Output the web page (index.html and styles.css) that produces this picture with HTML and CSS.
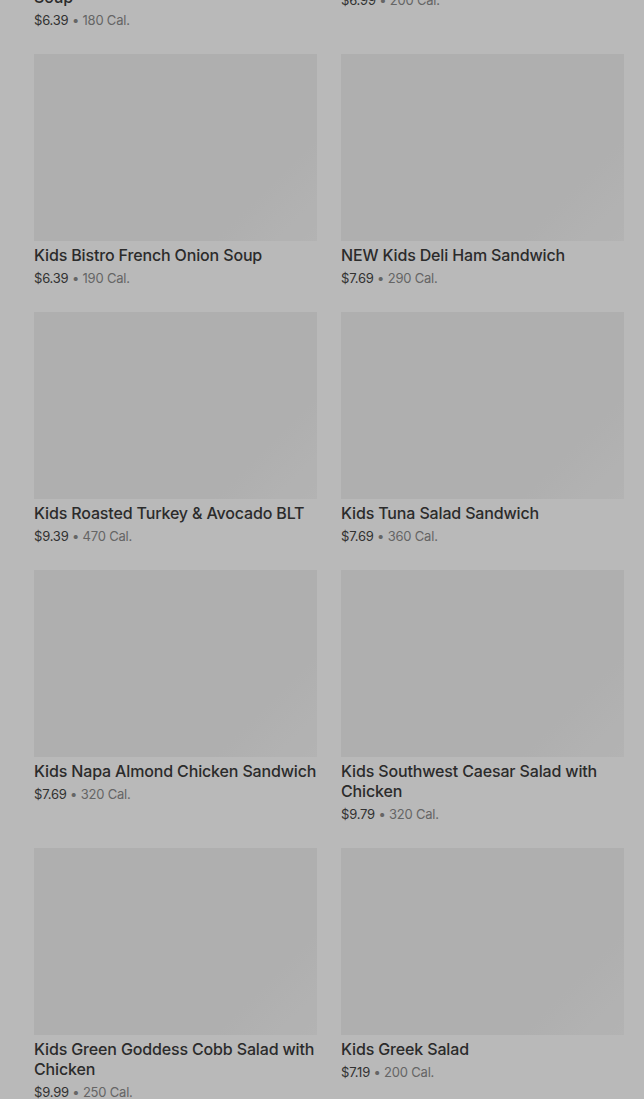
FILE: index.html
```html
<!DOCTYPE html>
<html lang="en">
<head>
    <meta charset="UTF-8">
    <meta name="viewport" content="width=device-width, initial-scale=1.0">
    <title>Kids Menu</title>
    <link rel="stylesheet" href="styles.css">
</head>
<body>
    <div class="overlay"></div>
    <main class="menu-grid">
        <div class="menu-item">
            <div class="item-image"></div>
            <h3 class="item-name">Kids Cream of Chicken &amp; Wild Rice Soup</h3>
            <p class="item-meta"><span class="price">$6.39</span> • 180 Cal.</p>
        </div>
        <div class="menu-item">
            <div class="item-image"></div>
            <h3 class="item-name">Kids Mac &amp; Cheese</h3>
            <p class="item-meta"><span class="price">$6.99</span> • 200 Cal.</p>
        </div>
        <div class="menu-item">
            <div class="item-image"></div>
            <h3 class="item-name">Kids Bistro French Onion Soup</h3>
            <p class="item-meta"><span class="price">$6.39</span> • 190 Cal.</p>
        </div>
        <div class="menu-item">
            <div class="item-image"></div>
            <h3 class="item-name">NEW Kids Deli Ham Sandwich</h3>
            <p class="item-meta"><span class="price">$7.69</span> • 290 Cal.</p>
        </div>
        <div class="menu-item">
            <div class="item-image"></div>
            <h3 class="item-name">Kids Roasted Turkey &amp; Avocado BLT</h3>
            <p class="item-meta"><span class="price">$9.39</span> • 470 Cal.</p>
        </div>
        <div class="menu-item">
            <div class="item-image"></div>
            <h3 class="item-name">Kids Tuna Salad Sandwich</h3>
            <p class="item-meta"><span class="price">$7.69</span> • 360 Cal.</p>
        </div>
        <div class="menu-item">
            <div class="item-image"></div>
            <h3 class="item-name">Kids Napa Almond Chicken Sandwich</h3>
            <p class="item-meta"><span class="price">$7.69</span> • 320 Cal.</p>
        </div>
        <div class="menu-item">
            <div class="item-image"></div>
            <h3 class="item-name">Kids Southwest Caesar Salad with Chicken</h3>
            <p class="item-meta"><span class="price">$9.79</span> • 320 Cal.</p>
        </div>
        <div class="menu-item">
            <div class="item-image"></div>
            <h3 class="item-name">Kids Green Goddess Cobb Salad with Chicken</h3>
            <p class="item-meta"><span class="price">$9.99</span> • 250 Cal.</p>
        </div>
        <div class="menu-item">
            <div class="item-image"></div>
            <h3 class="item-name">Kids Greek Salad</h3>
            <p class="item-meta"><span class="price">$7.19</span> • 200 Cal.</p>
        </div>
    </main>
</body>
</html>
```

FILE: styles.css
```css
body {
    margin: 0;
    background-color: #ffffff;
    font-family: 'Inter', 'Liberation Sans', sans-serif;
    overflow: hidden;
    height: 1099px;
}
/* page is scrolled down a bit */
.menu-grid {
    display: grid;
    grid-template-columns: 283px 283px;
    column-gap: 24px;
    row-gap: 24px;
    align-items: start;
    margin-top: -224px;
    padding: 0 20px 0 34px;
}
.item-image {
    height: 187px;
    background: linear-gradient(135deg, #f2f2f2 0%, #f2f2f2 78%, #f7f7f7 100%);
}
.item-name {
    margin: 4px 0 0 0;
    font-size: 16px;
    line-height: 20px;
    font-weight: 500;
    letter-spacing: -0.15px;
    color: #3c3c3c;
}
.item-meta {
    margin: 3px 0 0 0;
    font-size: 13px;
    line-height: 20px;
    letter-spacing: -0.2px;
    color: #8c8c8c;
}
.item-meta .price {
    color: #454545;
}
/* modal backdrop */
.overlay {
    position: fixed;
    inset: 0;
    background: rgba(0, 0, 0, 0.275);
    z-index: 10;
}
```
